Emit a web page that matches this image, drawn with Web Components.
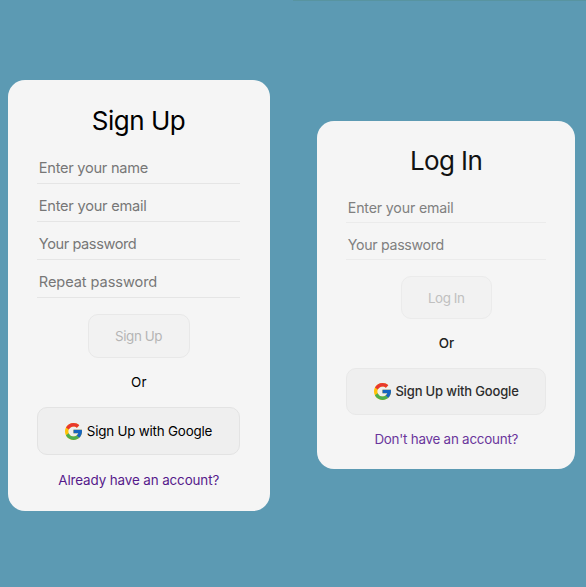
<!DOCTYPE html>
<html lang="en">
<head>
<meta charset="utf-8">
<title>Sign Up / Log In</title>
<style>
html, body { height: 100%; }
body { margin: 0; background: #5c9ab3; font-family: Inter, "Open Sans", sans-serif; overflow: hidden; }
</style>
</head>
<body>
<auth-page></auth-page>
<script>
const define = (name, html, setup) => {
  const tpl = document.createElement('template');
  tpl.innerHTML = html;
  customElements.define(name, class extends HTMLElement {
    connectedCallback() {
      if (this.shadowRoot) return;
      this.attachShadow({ mode: 'open' }).append(tpl.content.cloneNode(true));
      if (setup) setup(this);
    }
  });
};

// A line of text whose tracking is adjusted to fill a given width.
define('tracked-text', `
<style>
:host { display: inline-block; white-space: nowrap; flex: none; }
span { display: inline-block; }
</style><span><slot></slot></span>`, el => {
  const span = el.shadowRoot.querySelector('span');
  const n = el.textContent.length;
  const w = parseFloat(el.getAttribute('width'));
  const gap = (w - span.getBoundingClientRect().width) / (n - 1);
  span.style.letterSpacing = gap + 'px';
  span.style.marginRight = -gap + 'px';
});

define('google-logo', `
<style>:host { display: block; flex: none; width: 17px; height: 17px; } svg { display: block; width: 100%; height: 100%; }</style>
<svg viewBox="4 4 40 40">
<path fill="#FFC107" d="M43.611 20.083H42V20H24v8h11.303c-1.649 4.657-6.08 8-11.303 8-6.627 0-12-5.373-12-12s5.373-12 12-12c3.059 0 5.842 1.154 7.961 3.039l5.657-5.657C34.046 6.053 29.268 4 24 4 12.955 4 4 12.955 4 24s8.955 20 20 20 20-8.955 20-20c0-1.341-.138-2.65-.389-3.917z"/>
<path fill="#e8382f" d="M6.306 14.691l6.571 4.819C14.655 15.108 18.961 12 24 12c3.059 0 5.842 1.154 7.961 3.039l5.657-5.657C34.046 6.053 29.268 4 24 4 16.318 4 9.656 8.337 6.306 14.691z"/>
<path fill="#4CAF50" d="M24 44c5.166 0 9.86-1.977 13.409-5.192l-6.19-5.238C29.211 35.091 26.715 36 24 36c-5.202 0-9.619-3.317-11.283-7.946l-6.522 5.025C9.505 39.556 16.227 44 24 44z"/>
<path fill="#1565C0" d="M43.611 20.083H42V20H24v8h11.303c-.792 2.237-2.231 4.166-4.087 5.571l6.19 5.238C36.971 39.205 44 34 44 24c0-1.341-.138-2.65-.389-3.917z"/>
</svg>`);

define('auth-card', `
<style>
:host { display: flex; flex-direction: column; box-sizing: border-box; background: #f5f5f5; border-radius: 17px; }
</style><slot></slot>`);

define('card-title', `
<style>
:host { display: flex; justify-content: center; font-size: 26px; line-height: 32px; color: #000; }
</style><slot></slot>`);

define('text-field', `
<style>
:host { display: flex; align-items: flex-end; box-sizing: border-box; height: var(--field-height); padding: 0 1px var(--field-drop, 6px) 1.4px; border-bottom: 1px solid var(--rule, #e5e5e5); font-size: 14.6px; line-height: 18px; color: #777; }
</style><slot></slot>`);

define('push-button', `
<style>
:host { display: flex; align-items: center; justify-content: center; align-self: center; box-sizing: border-box; border: 1px solid #e3e3e3; border-radius: 10px; background: #efefef; font-size: 13.4px; line-height: 18px; color: #000; gap: 4.5px; }
:host([disabled]) { background: #f2f2f2; border-color: #e8e8e8; color: #b5b5b5; }
</style><slot></slot>`);

define('card-note', `
<style>
:host { display: flex; justify-content: center; font-size: 13.4px; line-height: 18px; color: #000; }
:host([link]) { color: #551a8b; }
</style><slot></slot>`);

define('auth-page', `
<style>
:host { display: flex; align-items: flex-start; box-sizing: border-box; height: 587px; padding-left: 7.6px; background: linear-gradient(#5894a0, #5894a0) 293px 0 / 293px 1px no-repeat #5c9ab3; }
.signup { width: 262.6px; height: 430.5px; margin-top: 80px; padding: 25px 30px 0 29.8px; --field-height: 38px; }
.signup text-field:first-of-type { margin-top: 9px; }
.signup .submit { width: 102px; height: 44px; margin-top: 16px; }
.signup .or { margin-top: 15px; }
.signup .google { width: 203px; height: 48px; margin-top: 16px; }
.signup .link { margin-top: 16px; }
.login { width: 258px; height: 348.4px; margin: 121px 0 0 47.2px; padding: 24px 29px 0 29px; --field-height: 37.5px; --field-drop: 5px; --rule: #ebebeb; }
.login card-title { color: #111; }
.login text-field { font-size: 14.2px; color: #808080; }
.login text-field:first-of-type { margin-top: 8px; }
.login .submit { width: 91px; height: 43px; margin-top: 16px; border-color: #ebebeb; color: #c0c0c0; }
.login .or { margin-top: 15px; color: #222; font-weight: 500; }
.login .google { width: 200px; height: 47px; margin-top: 15.5px; color: #2c2c2c; font-weight: 500; font-size: 13px; border-color: #e8e8e8; }
.login .link { margin-top: 15px; color: #6a359c; }
</style>
<auth-card class="signup">
<card-title><tracked-text width="94">Sign Up</tracked-text></card-title>
<text-field><tracked-text width="109.5">Enter your name</tracked-text></text-field>
<text-field><tracked-text width="108">Enter your email</tracked-text></text-field>
<text-field><tracked-text width="98">Your password</tracked-text></text-field>
<text-field><tracked-text width="118.5">Repeat password</tracked-text></text-field>
<push-button class="submit" disabled><tracked-text width="47.5">Sign Up</tracked-text></push-button>
<card-note class="or"><tracked-text width="15.5">Or</tracked-text></card-note>
<push-button class="google"><google-logo></google-logo><tracked-text width="125.5">Sign Up with Google</tracked-text></push-button>
<card-note class="link" link><tracked-text width="161">Already have an account?</tracked-text></card-note>
</auth-card>
<auth-card class="login">
<card-title><tracked-text width="73">Log In</tracked-text></card-title>
<text-field><tracked-text width="106">Enter your email</tracked-text></text-field>
<text-field><tracked-text width="96.5">Your password</tracked-text></text-field>
<push-button class="submit" disabled><tracked-text width="37">Log In</tracked-text></push-button>
<card-note class="or"><tracked-text width="15.5">Or</tracked-text></card-note>
<push-button class="google"><google-logo></google-logo><tracked-text width="123.5">Sign Up with Google</tracked-text></push-button>
<card-note class="link" link><tracked-text width="144">Don't have an account?</tracked-text></card-note>
</auth-card>`);
</script>
</body>
</html>
